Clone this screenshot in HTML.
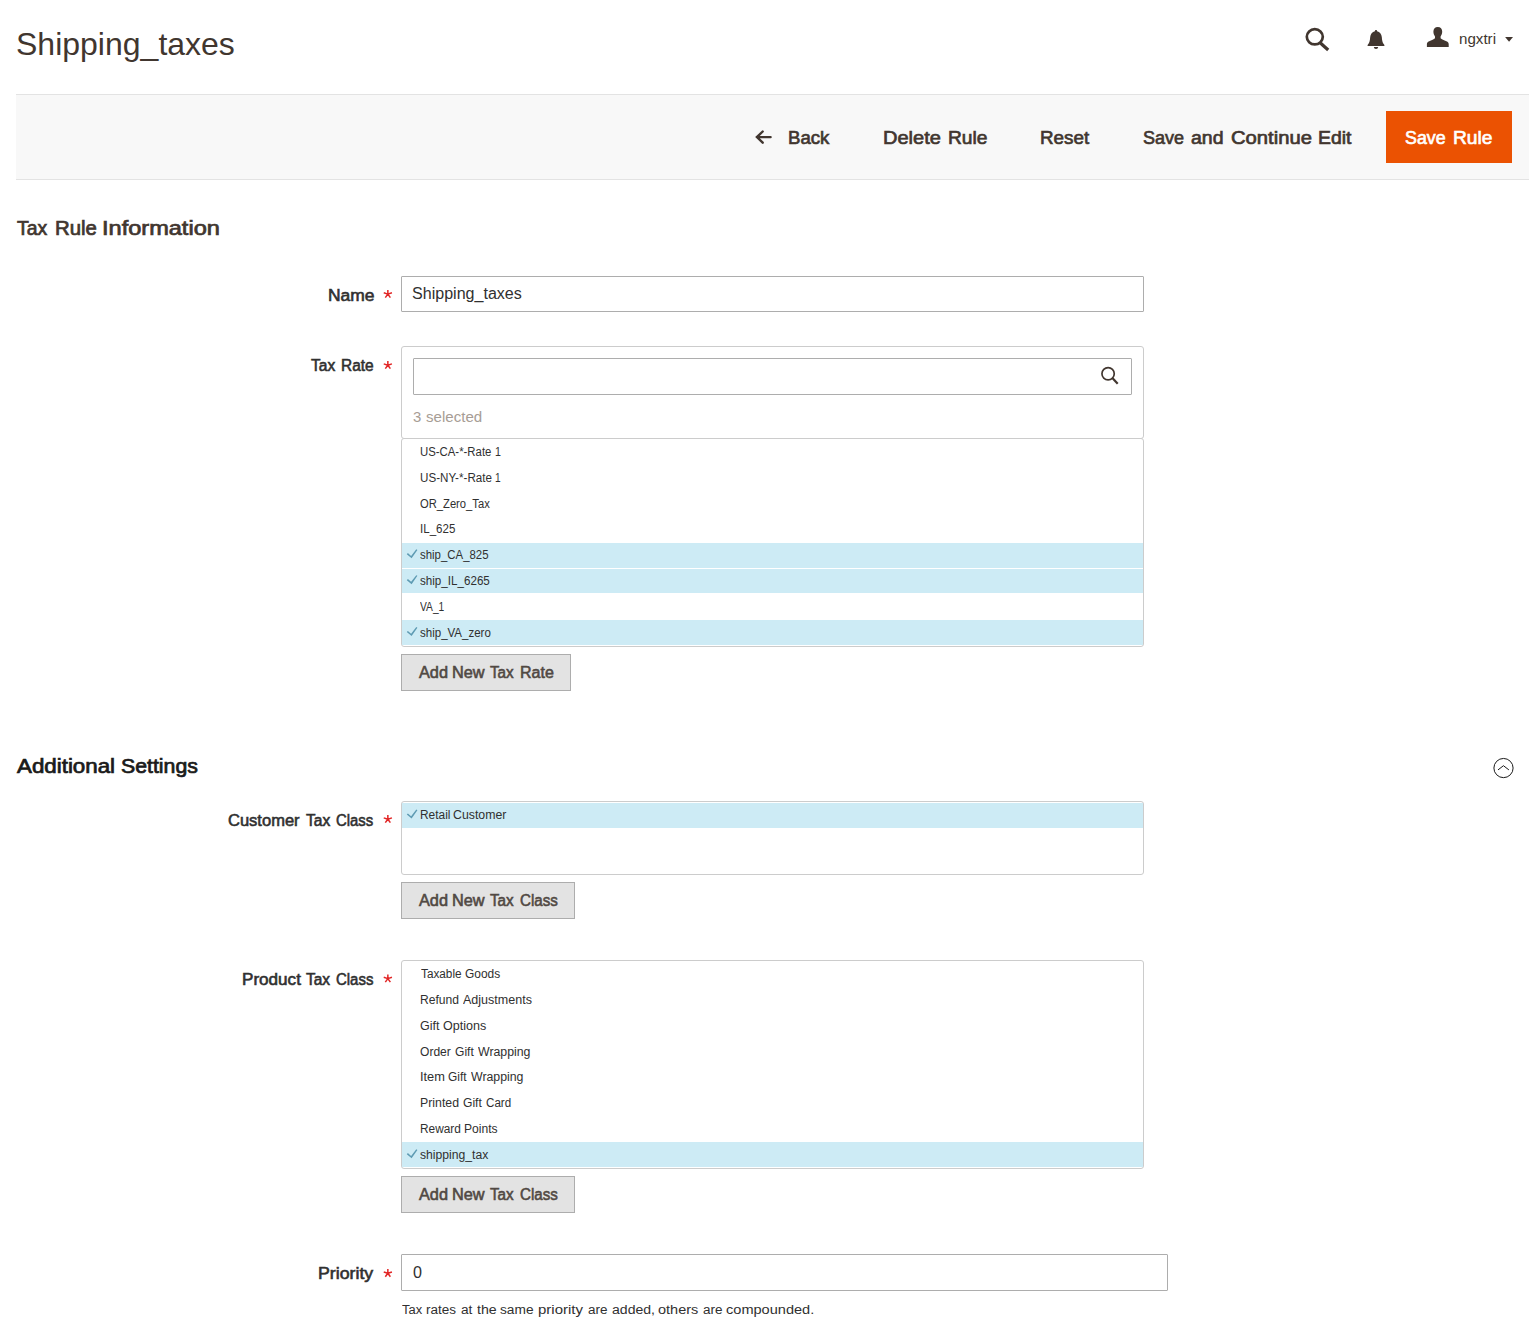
<!DOCTYPE html>
<html>
<head>
<meta charset="utf-8">
<title>Shipping_taxes</title>
<style>
html,body{margin:0;padding:0;background:#fff;}
body{width:1537px;height:1332px;position:relative;overflow:hidden;font-family:"Liberation Sans",sans-serif;color:#303030;}
.t{position:absolute;white-space:nowrap;line-height:1;margin:0;padding:0;transform-origin:0 0;}
.abs{position:absolute;box-sizing:border-box;}
.bar{left:16px;top:94px;width:1513px;height:86px;background:#f8f8f8;border-top:1px solid #e3e3e3;border-bottom:1px solid #e3e3e3;}
.inp{border:1px solid #adadad;border-radius:1px;background:#fff;}
.box{border:1px solid #cccccc;border-radius:3px;background:#fff;}
.btn{border:1px solid #adadad;background:#e3e3e3;}
.hl{background:#cdebf5;left:402px;width:741px;}
svg{position:absolute;overflow:visible;}
</style>
</head>
<body>

<!-- boxes and backgrounds -->
<div class="abs bar"></div>
<div class="abs" style="left:1386px;top:111px;width:126px;height:52px;background:#eb5202;"></div>

<div class="abs inp" style="left:401px;top:276px;width:743px;height:36px;"></div>

<div class="abs box" style="left:401px;top:346px;width:743px;height:93px;"></div>
<div class="abs inp" style="left:413px;top:358px;width:719px;height:37px;"></div>
<div class="abs box" style="left:401px;top:438px;width:743px;height:209px;"></div>
<div class="abs hl" style="top:543px;height:25px;"></div>
<div class="abs hl" style="top:569px;height:24px;"></div>
<div class="abs hl" style="top:620px;height:25px;"></div>
<div class="abs btn" style="left:401px;top:654px;width:170px;height:37px;"></div>

<div class="abs box" style="left:401px;top:801px;width:743px;height:74px;"></div>
<div class="abs hl" style="top:803px;height:25px;"></div>
<div class="abs btn" style="left:401px;top:882px;width:174px;height:37px;"></div>

<div class="abs box" style="left:401px;top:960px;width:743px;height:209px;"></div>
<div class="abs hl" style="top:1142px;height:25px;"></div>
<div class="abs btn" style="left:401px;top:1176px;width:174px;height:37px;"></div>

<div class="abs inp" style="left:401px;top:1254px;width:767px;height:37px;"></div>

<!-- icons -->
<svg width="1537" height="1332" viewBox="0 0 1537 1332" style="left:0;top:0;">
<!-- header search -->
<ellipse cx="1314.8" cy="36.8" rx="8.0" ry="7.6" stroke="#41362f" stroke-width="2.7" fill="none"/>
<path d="M1320.4,43.0 L1328.2,50.0" stroke="#41362f" stroke-width="3.2" fill="none"/>
<!-- bell -->
<path d="M1374.9,31.3 C1374.9,30.5 1375.4,30.1 1376,30.1 C1376.6,30.1 1377.1,30.5 1377.1,31.3 C1379.8,31.9 1381.5,34 1381.8,37 C1382.1,40.5 1382.4,42.6 1383.9,44.2 C1384.4,44.7 1384.5,45.2 1384.4,45.9 L1367.6,45.9 C1367.5,45.2 1367.6,44.7 1368.1,44.2 C1369.6,42.6 1369.9,40.5 1370.2,37 C1370.5,34 1372.2,31.9 1374.9,31.3 Z" fill="#41362f"/>
<path d="M1373.9,46.9 L1378.1,46.9 C1378.1,48.2 1377.2,48.9 1376,48.9 C1374.8,48.9 1373.9,48.2 1373.9,46.9 Z" fill="#41362f"/>
<!-- user -->
<path d="M1437.8,27.1 C1440.6,27.1 1442.2,29 1442.2,31.6 C1442.2,33.6 1441.6,35.2 1440.6,36.4 L1440.6,38.2 C1441.6,39.2 1444,40.2 1446.4,41.2 C1448,41.9 1448.7,42.8 1448.7,44.2 L1448.7,46.9 L1426.9,46.9 L1426.9,44.2 C1426.9,42.8 1427.6,41.9 1429.2,41.2 C1431.6,40.2 1434,39.2 1435,38.2 L1435,36.4 C1434,35.2 1433.4,33.6 1433.4,31.6 C1433.4,29 1435,27.1 1437.8,27.1 Z" fill="#41362f"/>
<!-- caret -->
<path d="M1505.1,36.9 L1513,36.9 L1509.05,41.7 Z" fill="#41362f"/>
<!-- back arrow -->
<path d="M770.6,137.1 L757.2,137.1 M762.7,131.5 L756.9,137.1 L762.7,142.7" stroke="#41362f" stroke-width="2.4" fill="none" stroke-linecap="round" stroke-linejoin="miter"/>
<!-- small search -->
<circle cx="1108.1" cy="373.8" r="6.15" stroke="#41362f" stroke-width="1.7" fill="none"/>
<path d="M1112.6,378.2 L1117.7,383.7" stroke="#41362f" stroke-width="2.2" fill="none"/>
<!-- collapse icon -->
<circle cx="1503.5" cy="768.05" r="9.6" stroke="#1a1a1a" stroke-width="1.0" fill="none"/>
<path d="M1498,769.9 L1503.45,765.7 L1508.9,769.9" stroke="#1a1a1a" stroke-width="1.0" fill="none"/>
<!-- required stars -->
<g transform="translate(387.85,294.1)"><path d="M0,0 L0,-4.2 M0,0 L4.09,-1.33 M0,0 L2.53,3.48 M0,0 L-2.53,3.48 M0,0 L-4.09,-1.33" stroke="#e22626" stroke-width="1.5" fill="none" stroke-linecap="butt"/></g>
<g transform="translate(387.85,365.2)"><path d="M0,0 L0,-4.2 M0,0 L4.09,-1.33 M0,0 L2.53,3.48 M0,0 L-2.53,3.48 M0,0 L-4.09,-1.33" stroke="#e22626" stroke-width="1.5" fill="none" stroke-linecap="butt"/></g>
<g transform="translate(387.85,819.2)"><path d="M0,0 L0,-4.2 M0,0 L4.09,-1.33 M0,0 L2.53,3.48 M0,0 L-2.53,3.48 M0,0 L-4.09,-1.33" stroke="#e22626" stroke-width="1.5" fill="none" stroke-linecap="butt"/></g>
<g transform="translate(387.85,978.6)"><path d="M0,0 L0,-4.2 M0,0 L4.09,-1.33 M0,0 L2.53,3.48 M0,0 L-2.53,3.48 M0,0 L-4.09,-1.33" stroke="#e22626" stroke-width="1.5" fill="none" stroke-linecap="butt"/></g>
<g transform="translate(387.85,1273.25)"><path d="M0,0 L0,-4.2 M0,0 L4.09,-1.33 M0,0 L2.53,3.48 M0,0 L-2.53,3.48 M0,0 L-4.09,-1.33" stroke="#e22626" stroke-width="1.5" fill="none" stroke-linecap="butt"/></g>
<!-- check marks -->
<g transform="translate(407.0,549.7)"><path d="M-0.2,4.6 L0.9,3.4 L4.1,6.2 L9.3,-0.4 L10.4,0.2 L4.6,8.6 Z" fill="#5e9bb3"/></g>
<g transform="translate(407.0,575.6)"><path d="M-0.2,4.6 L0.9,3.4 L4.1,6.2 L9.3,-0.4 L10.4,0.2 L4.6,8.6 Z" fill="#5e9bb3"/></g>
<g transform="translate(407.0,627.5)"><path d="M-0.2,4.6 L0.9,3.4 L4.1,6.2 L9.3,-0.4 L10.4,0.2 L4.6,8.6 Z" fill="#5e9bb3"/></g>
<g transform="translate(407.0,810.0)"><path d="M-0.2,4.6 L0.9,3.4 L4.1,6.2 L9.3,-0.4 L10.4,0.2 L4.6,8.6 Z" fill="#5e9bb3"/></g>
<g transform="translate(407.0,1149.7)"><path d="M-0.2,4.6 L0.9,3.4 L4.1,6.2 L9.3,-0.4 L10.4,0.2 L4.6,8.6 Z" fill="#5e9bb3"/></g>
</svg>

<!-- text -->
<div class="t" id="title" style="left:16.00px;top:28.74px;font-size:31.5px;color:#41362f;transform:scaleX(1.0161);">Shipping_taxes</div>
<div class="t" id="user" style="left:1459.00px;top:31.98px;font-size:14.2px;color:#41362f;transform:scaleX(1.0664);">ngxtri</div>
<div class="t" id="a_back" style="left:788.00px;top:129.21px;font-size:18.3px;color:#41362f;-webkit-text-stroke:0.66px #41362f;transform:scaleX(1.0172);">Back</div>
<div class="t" id="a_del_0" style="left:883.00px;top:129.21px;font-size:18.3px;color:#41362f;-webkit-text-stroke:0.66px #41362f;transform:scaleX(1.0955);">Delete</div>
<div class="t" id="a_del_1" style="left:948.00px;top:129.21px;font-size:18.3px;color:#41362f;-webkit-text-stroke:0.66px #41362f;transform:scaleX(1.0505);">Rule</div>
<div class="t" id="a_reset" style="left:1040.00px;top:129.21px;font-size:18.3px;color:#41362f;-webkit-text-stroke:0.66px #41362f;transform:scaleX(1.0289);">Reset</div>
<div class="t" id="a_savec_0" style="left:1143.00px;top:129.21px;font-size:18.3px;color:#41362f;-webkit-text-stroke:0.66px #41362f;transform:scaleX(0.9855);">Save</div>
<div class="t" id="a_savec_1" style="left:1191.00px;top:129.21px;font-size:18.3px;color:#41362f;-webkit-text-stroke:0.66px #41362f;transform:scaleX(1.0667);">and</div>
<div class="t" id="a_savec_2" style="left:1231.00px;top:129.21px;font-size:18.3px;color:#41362f;-webkit-text-stroke:0.66px #41362f;transform:scaleX(1.1058);">Continue</div>
<div class="t" id="a_savec_3" style="left:1318.00px;top:129.21px;font-size:18.3px;color:#41362f;-webkit-text-stroke:0.66px #41362f;transform:scaleX(1.0630);">Edit</div>
<div class="t" id="a_save_0" style="left:1405.00px;top:129.21px;font-size:18.3px;color:#ffffff;-webkit-text-stroke:0.66px #ffffff;transform:scaleX(0.9759);">Save</div>
<div class="t" id="a_save_1" style="left:1453.00px;top:129.21px;font-size:18.3px;color:#ffffff;-webkit-text-stroke:0.66px #ffffff;transform:scaleX(1.0505);">Rule</div>
<div class="t" id="h1_0" style="left:17.00px;top:218.78px;font-size:19.4px;color:#41362f;-webkit-text-stroke:0.70px #41362f;transform:scaleX(1.0010);">Tax</div>
<div class="t" id="h1_1" style="left:55.00px;top:218.78px;font-size:19.4px;color:#41362f;-webkit-text-stroke:0.70px #41362f;transform:scaleX(1.0503);">Rule</div>
<div class="t" id="h1_2" style="left:102.00px;top:218.78px;font-size:19.4px;color:#41362f;-webkit-text-stroke:0.70px #41362f;transform:scaleX(1.2148);">Information</div>
<div class="t" id="l_name" style="left:328.00px;top:288.01px;font-size:16px;color:#303030;-webkit-text-stroke:0.58px #303030;transform:scaleX(1.0893);">Name</div>
<div class="t" id="v_name" style="left:412.00px;top:285.76px;font-size:16px;color:#303030;transform:scaleX(1.0036);">Shipping_taxes</div>
<div class="t" id="l_rate_0" style="left:311.00px;top:358.01px;font-size:16px;color:#303030;-webkit-text-stroke:0.58px #303030;transform:scaleX(0.9745);">Tax</div>
<div class="t" id="l_rate_1" style="left:341.00px;top:358.01px;font-size:16px;color:#303030;-webkit-text-stroke:0.58px #303030;transform:scaleX(0.9661);">Rate</div>
<div class="t" id="sel3_0" style="left:413.00px;top:410.09px;font-size:14.9px;color:#a79d95;transform:scaleX(1.0010);">3</div>
<div class="t" id="sel3_1" style="left:426.00px;top:410.09px;font-size:14.9px;color:#a79d95;transform:scaleX(1.0124);">selected</div>
<div class="t" id="b_rate_0" style="left:419.00px;top:665.16px;font-size:16px;color:#514943;-webkit-text-stroke:0.58px #514943;transform:scaleX(1.0190);">Add</div>
<div class="t" id="b_rate_1" style="left:452.00px;top:665.16px;font-size:16px;color:#514943;-webkit-text-stroke:0.58px #514943;transform:scaleX(1.0188);">New</div>
<div class="t" id="b_rate_2" style="left:490.00px;top:665.16px;font-size:16px;color:#514943;-webkit-text-stroke:0.58px #514943;transform:scaleX(0.9507);">Tax</div>
<div class="t" id="b_rate_3" style="left:520.00px;top:665.16px;font-size:16px;color:#514943;-webkit-text-stroke:0.58px #514943;transform:scaleX(1.0010);">Rate</div>
<div class="t" id="h2_0" style="left:17.00px;top:757.13px;font-size:19.4px;color:#1a1a1a;-webkit-text-stroke:0.70px #1a1a1a;transform:scaleX(1.1513);">Additional</div>
<div class="t" id="h2_1" style="left:121.00px;top:757.13px;font-size:19.4px;color:#1a1a1a;-webkit-text-stroke:0.70px #1a1a1a;transform:scaleX(1.0968);">Settings</div>
<div class="t" id="l_cust_0" style="left:228.00px;top:813.01px;font-size:16px;color:#303030;-webkit-text-stroke:0.58px #303030;transform:scaleX(1.0318);">Customer</div>
<div class="t" id="l_cust_1" style="left:306.00px;top:813.01px;font-size:16px;color:#303030;-webkit-text-stroke:0.58px #303030;transform:scaleX(0.9745);">Tax</div>
<div class="t" id="l_cust_2" style="left:336.00px;top:813.01px;font-size:16px;color:#303030;-webkit-text-stroke:0.58px #303030;transform:scaleX(0.9293);">Class</div>
<div class="t" id="b_cls1_0" style="left:419.00px;top:893.16px;font-size:16px;color:#514943;-webkit-text-stroke:0.58px #514943;transform:scaleX(1.0190);">Add</div>
<div class="t" id="b_cls1_1" style="left:452.00px;top:893.16px;font-size:16px;color:#514943;-webkit-text-stroke:0.58px #514943;transform:scaleX(1.0188);">New</div>
<div class="t" id="b_cls1_2" style="left:490.00px;top:893.16px;font-size:16px;color:#514943;-webkit-text-stroke:0.58px #514943;transform:scaleX(0.9507);">Tax</div>
<div class="t" id="b_cls1_3" style="left:520.00px;top:893.16px;font-size:16px;color:#514943;-webkit-text-stroke:0.58px #514943;transform:scaleX(0.9443);">Class</div>
<div class="t" id="l_prod_0" style="left:242.00px;top:971.86px;font-size:16px;color:#303030;-webkit-text-stroke:0.58px #303030;transform:scaleX(1.0684);">Product</div>
<div class="t" id="l_prod_1" style="left:306.00px;top:971.86px;font-size:16px;color:#303030;-webkit-text-stroke:0.58px #303030;transform:scaleX(0.9665);">Tax</div>
<div class="t" id="l_prod_2" style="left:336.00px;top:971.86px;font-size:16px;color:#303030;-webkit-text-stroke:0.58px #303030;transform:scaleX(0.9343);">Class</div>
<div class="t" id="b_cls2_0" style="left:419.00px;top:1186.86px;font-size:16px;color:#514943;-webkit-text-stroke:0.58px #514943;transform:scaleX(1.0190);">Add</div>
<div class="t" id="b_cls2_1" style="left:452.00px;top:1186.86px;font-size:16px;color:#514943;-webkit-text-stroke:0.58px #514943;transform:scaleX(1.0188);">New</div>
<div class="t" id="b_cls2_2" style="left:490.00px;top:1186.86px;font-size:16px;color:#514943;-webkit-text-stroke:0.58px #514943;transform:scaleX(0.9507);">Tax</div>
<div class="t" id="b_cls2_3" style="left:520.00px;top:1186.86px;font-size:16px;color:#514943;-webkit-text-stroke:0.58px #514943;transform:scaleX(0.9443);">Class</div>
<div class="t" id="l_prio" style="left:318.00px;top:1266.01px;font-size:16px;color:#303030;-webkit-text-stroke:0.58px #303030;transform:scaleX(1.1097);">Priority</div>
<div class="t" id="v_prio" style="left:413.00px;top:1264.76px;font-size:16px;color:#303030;transform:scaleX(1.0081);">0</div>
<div class="t" id="note_0" style="left:402.00px;top:1303.45px;font-size:13.7px;color:#303030;transform:scaleX(0.9441);">Tax</div>
<div class="t" id="note_1" style="left:426.00px;top:1303.45px;font-size:13.7px;color:#303030;transform:scaleX(0.9887);">rates</div>
<div class="t" id="note_2" style="left:461.00px;top:1303.45px;font-size:13.7px;color:#303030;transform:scaleX(1.0010);">at</div>
<div class="t" id="note_3" style="left:477.00px;top:1303.45px;font-size:13.7px;color:#303030;transform:scaleX(1.0346);">the</div>
<div class="t" id="note_4" style="left:500.00px;top:1303.45px;font-size:13.7px;color:#303030;transform:scaleX(1.0010);">same</div>
<div class="t" id="note_5" style="left:538.00px;top:1303.45px;font-size:13.7px;color:#303030;transform:scaleX(1.0943);">priority</div>
<div class="t" id="note_6" style="left:588.00px;top:1303.45px;font-size:13.7px;color:#303030;transform:scaleX(0.9849);">are</div>
<div class="t" id="note_7" style="left:612.00px;top:1303.45px;font-size:13.7px;color:#303030;transform:scaleX(1.0277);">added,</div>
<div class="t" id="note_8" style="left:658.00px;top:1303.45px;font-size:13.7px;color:#303030;transform:scaleX(1.0591);">others</div>
<div class="t" id="note_9" style="left:703.00px;top:1303.45px;font-size:13.7px;color:#303030;transform:scaleX(0.9849);">are</div>
<div class="t" id="note_10" style="left:726.00px;top:1303.45px;font-size:13.7px;color:#303030;transform:scaleX(1.0636);">compounded.</div>
<div class="t" id="o_r0_0" style="left:420.00px;top:445.79px;font-size:12.3px;color:#303030;transform:scaleX(0.9242);">US-CA-*-Rate</div>
<div class="t" id="o_r0_1" style="left:495.00px;top:445.79px;font-size:12.3px;color:#303030;transform:scaleX(0.8704);">1</div>
<div class="t" id="o_r1_0" style="left:420.00px;top:471.69px;font-size:12.3px;color:#303030;transform:scaleX(0.9457);">US-NY-*-Rate</div>
<div class="t" id="o_r1_1" style="left:495.00px;top:471.69px;font-size:12.3px;color:#303030;transform:scaleX(0.8246);">1</div>
<div class="t" id="o_r2" style="left:420.00px;top:497.59px;font-size:12.3px;color:#303030;transform:scaleX(0.9110);">OR_Zero_Tax</div>
<div class="t" id="o_r3" style="left:420.00px;top:523.29px;font-size:12.3px;color:#303030;transform:scaleX(0.9389);">IL_625</div>
<div class="t" id="o_r4" style="left:420.00px;top:548.99px;font-size:12.3px;color:#303030;transform:scaleX(0.9288);">ship_CA_825</div>
<div class="t" id="o_r5" style="left:420.00px;top:574.89px;font-size:12.3px;color:#303030;transform:scaleX(0.9453);">ship_IL_6265</div>
<div class="t" id="o_r6" style="left:420.00px;top:600.89px;font-size:12.3px;color:#303030;transform:scaleX(0.8316);">VA_1</div>
<div class="t" id="o_r7" style="left:420.00px;top:626.79px;font-size:12.3px;color:#303030;transform:scaleX(0.9368);">ship_VA_zero</div>
<div class="t" id="o_c0_0" style="left:420.00px;top:809.39px;font-size:12.3px;color:#303030;transform:scaleX(0.9685);">Retail</div>
<div class="t" id="o_c0_1" style="left:453.00px;top:809.39px;font-size:12.3px;color:#303030;transform:scaleX(1.0010);">Customer</div>
<div class="t" id="o_p0_0" style="left:421.00px;top:968.14px;font-size:12.3px;color:#303030;transform:scaleX(0.9567);">Taxable</div>
<div class="t" id="o_p0_1" style="left:465.00px;top:968.14px;font-size:12.3px;color:#303030;transform:scaleX(0.9719);">Goods</div>
<div class="t" id="o_p1_0" style="left:420.00px;top:994.14px;font-size:12.3px;color:#303030;transform:scaleX(0.9831);">Refund</div>
<div class="t" id="o_p1_1" style="left:463.00px;top:994.14px;font-size:12.3px;color:#303030;transform:scaleX(1.0184);">Adjustments</div>
<div class="t" id="o_p2_0" style="left:420.00px;top:1019.99px;font-size:12.3px;color:#303030;transform:scaleX(1.0188);">Gift</div>
<div class="t" id="o_p2_1" style="left:443.00px;top:1019.99px;font-size:12.3px;color:#303030;transform:scaleX(1.0196);">Options</div>
<div class="t" id="o_p3_0" style="left:420.00px;top:1045.89px;font-size:12.3px;color:#303030;transform:scaleX(0.9807);">Order</div>
<div class="t" id="o_p3_1" style="left:455.00px;top:1045.89px;font-size:12.3px;color:#303030;transform:scaleX(0.9804);">Gift</div>
<div class="t" id="o_p3_2" style="left:478.00px;top:1045.89px;font-size:12.3px;color:#303030;transform:scaleX(1.0010);">Wrapping</div>
<div class="t" id="o_p4_0" style="left:420.00px;top:1070.99px;font-size:12.3px;color:#303030;transform:scaleX(1.0421);">Item</div>
<div class="t" id="o_p4_1" style="left:448.00px;top:1070.99px;font-size:12.3px;color:#303030;transform:scaleX(0.9703);">Gift</div>
<div class="t" id="o_p4_2" style="left:471.00px;top:1070.99px;font-size:12.3px;color:#303030;transform:scaleX(1.0010);">Wrapping</div>
<div class="t" id="o_p5_0" style="left:420.00px;top:1097.39px;font-size:12.3px;color:#303030;transform:scaleX(1.0010);">Printed</div>
<div class="t" id="o_p5_1" style="left:463.00px;top:1097.39px;font-size:12.3px;color:#303030;transform:scaleX(0.9853);">Gift</div>
<div class="t" id="o_p5_2" style="left:486.00px;top:1097.39px;font-size:12.3px;color:#303030;transform:scaleX(0.9432);">Card</div>
<div class="t" id="o_p6_0" style="left:420.00px;top:1123.19px;font-size:12.3px;color:#303030;transform:scaleX(0.9638);">Reward</div>
<div class="t" id="o_p6_1" style="left:464.00px;top:1123.19px;font-size:12.3px;color:#303030;transform:scaleX(0.9836);">Points</div>
<div class="t" id="o_p7" style="left:420.00px;top:1148.99px;font-size:12.3px;color:#303030;transform:scaleX(0.9893);">shipping_tax</div>
</body>
</html>
